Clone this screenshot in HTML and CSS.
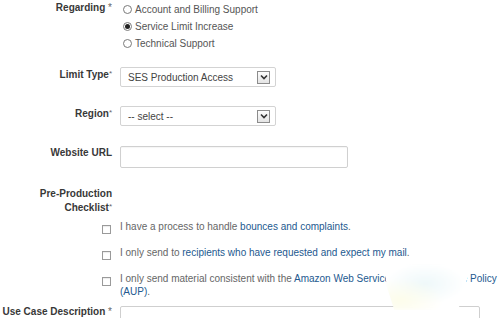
FILE: index.html
```html
<!DOCTYPE html>
<html lang="en">
<head>
  <meta charset="UTF-8">
  <title>Service Limit Increase</title>
  <link rel="stylesheet" href="styles.css">
</head>
<body>

  <form class="case-form">
    <div class="row row-regarding">
      <div class="label">Regarding <span class="req">*</span></div>
      <div class="field radios">
        <div class="radio"><span class="dot"></span>Account and Billing Support</div>
        <div class="radio checked"><span class="dot"></span>Service Limit Increase</div>
        <div class="radio"><span class="dot"></span>Technical Support</div>
      </div>
    </div>

    <div class="row row-limit">
      <div class="label">Limit Type<span class="req sup">*</span></div>
      <div class="field">
        <div class="select">
          <span>SES Production Access</span>
          <span class="arrow"><svg width="8" height="6" viewBox="0 0 8 6"><path d="M1 1.5 L4 4.5 L7 1.5" fill="none" stroke="#333" stroke-width="1.6"/></svg></span>
        </div>
      </div>
    </div>

    <div class="row row-region">
      <div class="label">Region<span class="req sup">*</span></div>
      <div class="field">
        <div class="select">
          <span>-- select --</span>
          <span class="arrow"><svg width="8" height="6" viewBox="0 0 8 6"><path d="M1 1.5 L4 4.5 L7 1.5" fill="none" stroke="#333" stroke-width="1.6"/></svg></span>
        </div>
      </div>
    </div>

    <div class="row row-url">
      <div class="label">Website URL</div>
      <div class="field"><div class="input"></div></div>
    </div>

    <div class="row row-checklist">
      <div class="label">Pre-Production<br>Checklist<span class="req sup">*</span></div>
      <div class="field"></div>
    </div>

    <div class="row check-row first-check">
      <div class="box-cell"><span class="box"></span></div>
      <div class="field">I have a process to handle <a href="#">bounces and complaints</a>.</div>
    </div>
    <div class="row check-row">
      <div class="box-cell"><span class="box"></span></div>
      <div class="field">I only send to <a href="#">recipients who have requested and expect my mail</a>.</div>
    </div>
    <div class="row check-row">
      <div class="box-cell"><span class="box"></span></div>
      <div class="field">I only send material consistent with the <a href="#">Amazon Web Services Acceptable Use Policy (AUP)</a>.</div>
    </div>

    <div class="row row-usecase">
      <div class="label">Use Case Description <span class="req">*</span></div>
      <div class="field"><div class="textarea"></div></div>
    </div>

    <div class="smudge"></div>
  </form>

</body>
</html>
```

FILE: styles.css
```css
body {
  margin: 0;
  font-family: "Liberation Sans", Arial, sans-serif;
  font-size: 10px;
  color: #555;
  background: #fff;
  height: 318px;
  overflow: hidden;
}
.case-form {
  position: relative;
  padding-top: 1px;
}
.row {
  display: grid;
  grid-template-columns: 112px 1fr;
  column-gap: 8px;
}
.label {
  text-align: right;
  font-weight: bold;
  color: #383838;
  line-height: 12px;
  padding-top: 1px;
}
.req {
  font-weight: normal;
  color: #666;
}
.req.sup {
  font-size: 8px;
  vertical-align: 2px;
}
a {
  color: #23598f;
  text-decoration: none;
}

/* radios */
.radio {
  display: flex;
  align-items: center;
  height: 17px;
  color: #555;
}
.dot {
  width: 7px;
  height: 7px;
  border: 1px solid #7a7a7a;
  border-radius: 50%;
  margin: 0 3px 0 3px;
  position: relative;
  background: #fff;
}
.radio.checked .dot::after {
  content: "";
  position: absolute;
  left: 1px;
  top: 1px;
  width: 5px;
  height: 5px;
  border-radius: 50%;
  background: #222;
}

/* selects and inputs */
.row-limit { margin-top: 15px; }
.row-region { margin-top: 19px; }
.row-url { margin-top: 20px; }
.select {
  width: 156px;
  height: 20px;
  box-sizing: border-box;
  border: 1px solid #d3d3d3;
  border-radius: 2px;
  display: flex;
  align-items: center;
  justify-content: space-between;
  padding: 0 5px 0 7px;
  color: #444;
  background: #fff;
}
.arrow {
  width: 11px;
  height: 11px;
  border: 1px solid #8c8c8c;
  background: linear-gradient(#fdfdfd, #e4e4e4);
  display: flex;
  align-items: center;
  justify-content: center;
}
.input {
  width: 228px;
  height: 22px;
  box-sizing: border-box;
  border: 1px solid #d0d0d0;
  border-radius: 2px;
  box-shadow: inset 0 1px 1px rgba(0, 0, 0, 0.04);
}

/* checklist */
.row-checklist { margin-top: 19px; }
.row-checklist .label { line-height: 13px; padding-top: 0; }
.check-row {
  margin-top: 12px;
  line-height: 13px;
  color: #666;
}
.first-check { margin-top: 6px; }
.box-cell {
  display: flex;
  justify-content: flex-end;
  padding-right: 1px;
}
.box {
  width: 7px;
  height: 7px;
  margin-top: 5px;
  border: 1px solid #9a9a9a;
  background: #fff;
  box-shadow: inset 0 1px 1px rgba(0, 0, 0, 0.08);
}

/* use case */
.row-usecase { margin-top: 8px; }
.row-usecase .label { padding-top: 0; line-height: 12px; }
.textarea {
  width: 360px;
  height: 40px;
  box-sizing: border-box;
  border: 1px solid #cfcfcf;
  border-radius: 2px;
}

/* washed-out mark over the lower right */
.smudge {
  position: absolute;
  left: 383px;
  top: 262px;
  width: 94px;
  height: 48px;
  background:
    radial-gradient(ellipse at 18% 80%, rgba(252, 252, 232, 0.9), rgba(255, 255, 255, 0) 40%),
    radial-gradient(ellipse at 45% 45%, rgba(236, 247, 249, 0.9), rgba(255, 255, 255, 0) 55%),
    #fff;
  clip-path: polygon(1% 6%, 100% 0%, 90% 30%, 80% 100%, 12% 100%, 4% 50%);
  filter: blur(1.5px);
}
```
